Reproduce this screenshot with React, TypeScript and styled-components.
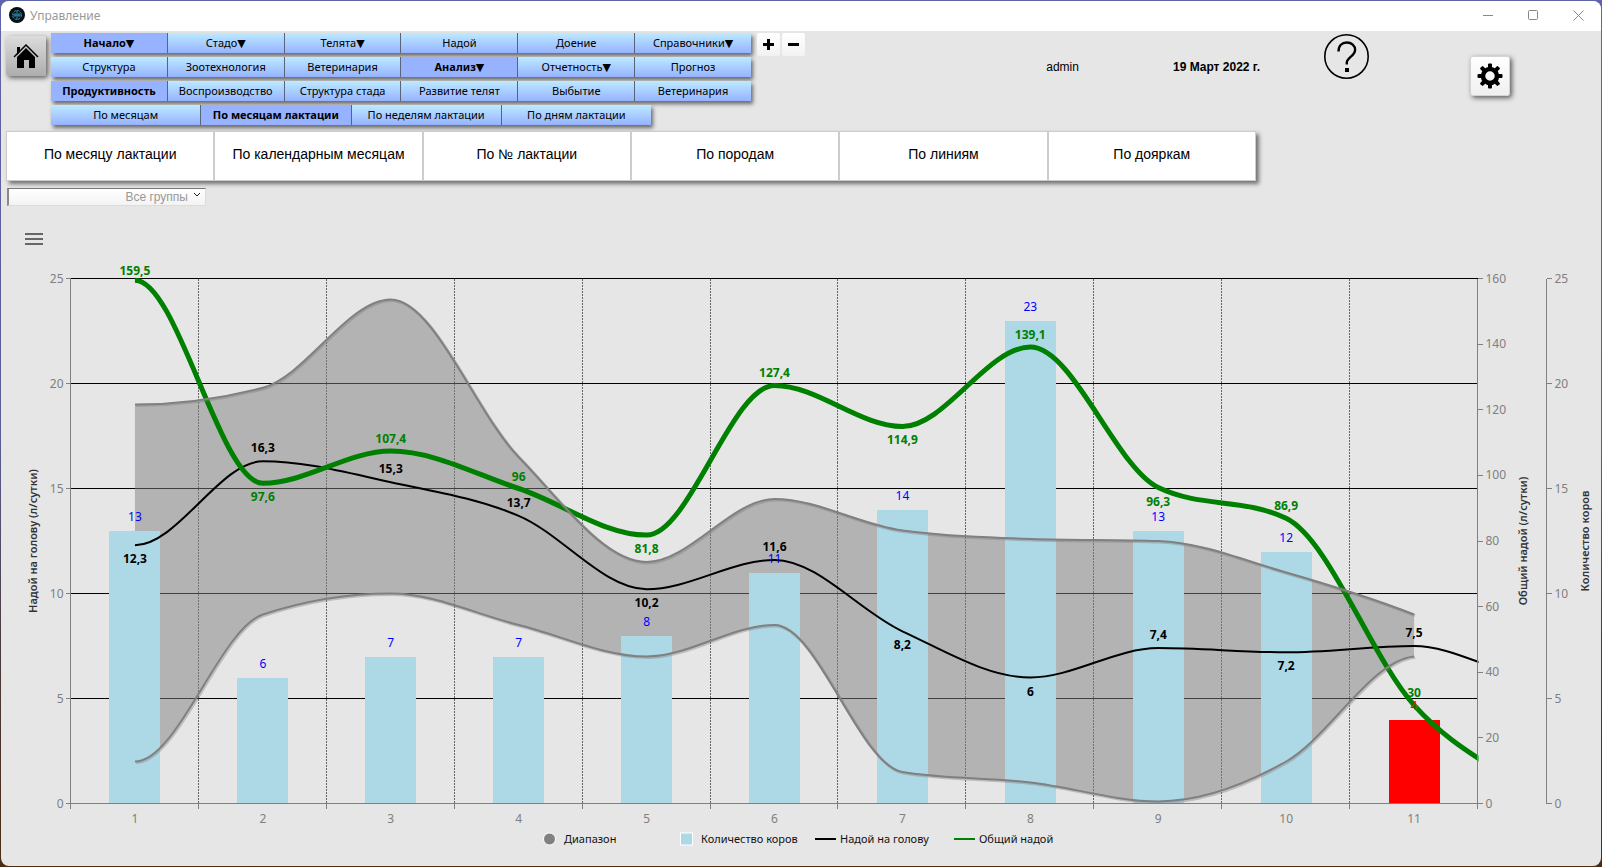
import React, { useEffect, useRef, useState } from "react";
import styled, { createGlobalStyle, css } from "styled-components";

const UI = `"Noto Sans", "DejaVu Sans", sans-serif`;
const ARIAL = `"Liberation Sans", Arial, sans-serif`;

const GlobalStyle = createGlobalStyle`
  * { box-sizing: border-box; }
  html, body, #root { height: 100%; }
  body { margin: 0; background: #5b5f9c; font-family: ${UI}; }
  button { font: inherit; color: inherit; padding: 0; border: 0; cursor: pointer; }
`;

const Desktop = styled.div`
  min-height: 100%;
  padding: 1px;
  display: flex;
  background: linear-gradient(to bottom, #5f63a8 0%, #5a5e96 50%, #4a3a3c 75%, #4d2c14 100%);
`;

const Window = styled.div`
  flex: 1;
  min-width: 0;
  display: flex;
  flex-direction: column;
  background: #e6e6e6;
  border-radius: 8px;
  overflow: hidden;
`;

const TitleBar = styled.header`
  display: flex;
  align-items: center;
  height: 30px;
  padding: 0 16px 2px 8px;
  background: #fff;
  font-size: 12px;
  color: #999;
`;

const Title = styled.h1`
  flex: 1;
  margin: 0 0 0 5px;
  font: inherit;
`;

const Caption = styled.div`
  display: flex;
  gap: 32px;
`;

const CaptionButton = styled.button`
  display: flex;
  justify-content: center;
  width: 13px;
  background: none;
`;

const Header = styled.div`
  display: flex;
  align-items: flex-start;
  padding: 2px 91px 0 5px;
`;

const HomeButton = styled.button`
  width: 40px;
  height: 40px;
  margin: 3px 5px 0 0;
  display: grid;
  place-items: center;
  border-radius: 3px;
  background: linear-gradient(#dcdcdc, #adadad);
  box-shadow: 2px 2px 5px rgba(0, 0, 0, 0.6);
`;

const Menus = styled.nav`
  flex: 0 1 700px;
  display: flex;
  flex-direction: column;
  gap: 4px;
`;

const MenuRow = styled.div<{ $short?: boolean }>`
  display: flex;
  width: ${(p) => (p.$short ? "600px" : "100%")};
  max-width: 100%;
  height: 20px;
  box-shadow: 2px 3px 4px rgba(0, 0, 0, 0.55);
`;

const MenuButton = styled.button<{ $active?: boolean }>`
  flex: 1 1 0;
  min-width: 0;
  font-size: 11px;
  line-height: 20px;
  white-space: nowrap;
  color: #000;
  background: linear-gradient(#bdeaff, #96b3ff);
  & + & { border-left: 1px solid #5a6478; }
  ${(p) => p.$active && css`
    font-weight: 700;
    background: #97b2ff;
  `}
`;

const ZoomButtons = styled.div`
  display: flex;
  gap: 2px;
  margin-left: 6px;
`;

const SmallButton = styled.button`
  width: 23px;
  height: 23px;
  display: grid;
  place-items: center;
  border-radius: 2px;
  background: linear-gradient(#fff, #f2f2f2);
`;

const Account = styled.div`
  display: flex;
  align-items: flex-start;
  margin-left: auto;
  font-family: ${ARIAL};
  font-size: 12px;
  line-height: 16px;
`;

const User = styled.span`
  margin: 26px 94px 0 0;
`;

const Today = styled.strong`
  margin: 26px 64px 0 0;
`;

const HelpButton = styled.button`
  width: 45px;
  height: 45px;
  margin: 1px 101px 0 0;
  background: none;
`;

const GearButton = styled.button`
  width: 40px;
  height: 40px;
  margin-top: 23px;
  display: grid;
  place-items: center;
  border: 1px solid #d4d4d4;
  border-radius: 3px;
  background: linear-gradient(#fff, #f0f0f0);
  box-shadow: 2px 2px 5px rgba(0, 0, 0, 0.6);
`;

const Reports = styled.div`
  display: flex;
  width: calc(78% + 2px);
  height: 50px;
  margin: 6px 0 0 5px;
  border: 1px solid #ccc;
  background: #fff;
  box-shadow: 3px 3px 4px rgba(0, 0, 0, 0.5);
`;

const ReportButton = styled.button`
  flex: 1 1 0;
  padding-bottom: 5px;
  background: #fff;
  font-family: ${ARIAL};
  font-size: 14px;
  & + & { border-left: 2px solid #ccc; }
`;

const GroupField = styled.label`
  position: relative;
  display: block;
  width: 199px;
  height: 18px;
  margin: 7px 0 0 6px;
`;

const GroupSelect = styled.select`
  appearance: none;
  display: block;
  width: 100%;
  height: 100%;
  padding: 0 17px 0 4px;
  border: 1px solid #dcdcdc;
  border-top-color: #777;
  border-left: 2px solid #888;
  border-radius: 0;
  background: linear-gradient(#fff, #f3f3f3);
  color: #999;
  font-family: ${ARIAL};
  font-size: 12px;
  text-align: right;
  text-align-last: right;
`;

const SelectArrow = styled.svg`
  position: absolute;
  right: 5px;
  top: 4px;
  pointer-events: none;
`;

const ChartPanel = styled.main`
  position: relative;
  flex: 1;
  padding-bottom: 17px;
`;

const ChartMenu = styled.button`
  position: absolute;
  left: 24px;
  top: 27px;
  width: 18px;
  height: 14px;
  background: none;
  display: flex;
`;

const Plot = styled.svg`
  display: block;
  width: 100%;
  height: 624px;
  font-family: ${UI};
  font-size: 12px;
`;

const Legend = styled.ul`
  display: flex;
  justify-content: center;
  margin: 0;
  padding: 0;
  list-style: none;
  font-size: 11px;
  line-height: 18px;
  color: #111;
`;

const LegendItem = styled.li<{ $width: number; $gap?: number }>`
  display: flex;
  align-items: center;
  gap: ${(p) => p.$gap ?? 4}px;
  min-width: ${(p) => p.$width}px;
  white-space: nowrap;
`;

const menus: { short?: boolean; active: string; items: string[] }[] = [
  { active: "Начало▼", items: ["Начало▼", "Стадо▼", "Телята▼", "Надой", "Доение", "Справочники▼"] },
  { active: "Анализ▼", items: ["Структура", "Зоотехнология", "Ветеринария", "Анализ▼", "Отчетность▼", "Прогноз"] },
  { active: "Продуктивность", items: ["Продуктивность", "Воспроизводство", "Структура стада", "Развитие телят", "Выбытие", "Ветеринария"] },
  { short: true, active: "По месяцам лактации", items: ["По месяцам", "По месяцам лактации", "По неделям лактации", "По дням лактации"] },
];

const reports = ["По месяцу лактации", "По календарным месяцам", "По № лактации", "По породам", "По линиям", "По дояркам"];

const cows = [13, 6, 7, 7, 8, 11, 14, 23, 13, 12, 4];
const perHead = [12.3, 16.3, 15.3, 13.7, 10.2, 11.6, 8.2, 6, 7.4, 7.2, 7.5, 6];
const total = [159.5, 97.6, 107.4, 96, 81.8, 127.4, 114.9, 139.1, 96.3, 86.9, 30, 0];
const high = [19, 19.8, 24, 16.5, 11.5, 14.5, 13, 12.6, 12.5, 11, 9];
const low = [2, 9, 10, 8.5, 7, 8.5, 1.5, 1, 0.1, 2, 7];
const perHeadBelow = [0, 4, 6, 7, 9];
const totalBelow = [1, 4, 6, 8];

const TOP = 72.5;
const HEIGHT = 525;
const LEFT = 69.5;

/* Monotone cubic through the values; the slopes at both ends are given. */
function smooth(ys: number[], x0: number, step: number, first = 0, last = 0) {
  const n = ys.length;
  const d = ys.slice(1).map((y, i) => y - ys[i]);
  const m = ys.map((_, i) => {
    if (i === 0) return first;
    if (i === n - 1) return last;
    const a = d[i - 1];
    const b = d[i];
    if (a * b <= 0) return 0;
    return Math.sign(a) * 2 * Math.min(Math.abs(a), Math.abs(b), Math.abs(a + b) / 4);
  });
  let path = `${x0} ${ys[0]}`;
  for (let i = 1; i < n; i++) {
    const xa = x0 + (i - 1) * step;
    const xb = xa + step;
    path += ` C${xa + step / 3} ${ys[i - 1] + m[i - 1] / 3} ${xb - step / 3} ${ys[i] - m[i] / 3} ${xb} ${ys[i]}`;
  }
  return path;
}

const comma = (n: number) => String(n).replace(".", ",");

function MilkChart() {
  const ref = useRef<SVGSVGElement>(null);
  const [width, setWidth] = useState(() => window.innerWidth - 2);
  useEffect(() => {
    const el = ref.current;
    if (!el) return;
    const observer = new ResizeObserver(() => setWidth(el.clientWidth || el.getBoundingClientRect().width));
    observer.observe(el);
    return () => observer.disconnect();
  }, []);

  const right = width - 123.5;
  const step = (right - LEFT) / 11;
  const x0 = LEFT + step / 2 + 0.5;
  const bottom = TOP + HEIGHT;
  const y25 = (v: number) => bottom - (v * HEIGHT) / 25;
  const y160 = (v: number) => bottom - (v * HEIGHT) / 160;
  const x = (i: number) => x0 + i * step;
  const barWidth = Math.round(step * 0.4);
  const axis2 = right + 69;

  const highPath = smooth(high.map(y25), x0, step, 0, 50);
  const lowYs = low.map(y25);
  const lowPath = smooth(lowYs, x0, step, 0, -12);
  const backPath = smooth([...lowYs].reverse(), x(10), -step, 12, 0);
  const scale25 = [0, 5, 10, 15, 20, 25];
  const scale160 = [0, 20, 40, 60, 80, 100, 120, 140, 160];

  return (
    <Plot ref={ref} role="img" aria-label="Надой по месяцам лактации">
      <defs>
        <clipPath id="plot-area">
          <rect x={LEFT} y={TOP - 10} width={right - LEFT + 1} height={HEIGHT + 10} />
        </clipPath>
      </defs>

      <g stroke="#000" shapeRendering="crispEdges">
        {scale25.slice(1).map((v) => <line key={v} x1={LEFT} x2={right} y1={y25(v)} y2={y25(v)} />)}
      </g>
      <g stroke="#666" strokeDasharray="2 1" shapeRendering="crispEdges">
        {cows.slice(1).map((_, i) => (
          <line key={i} x1={LEFT + (i + 1) * step} x2={LEFT + (i + 1) * step} y1={TOP} y2={bottom} />
        ))}
      </g>

      <path d={`M${highPath} L${backPath} Z`} fill="#808080" fillOpacity="0.5" />
      {cows.map((v, i) => (
        <rect
          key={i}
          x={Math.round(x(i) - barWidth / 2)}
          y={Math.round(y25(v))}
          width={barWidth}
          height={Math.round(bottom - y25(v))}
          fill={i === 10 ? "#f00" : "#add8e6"}
        />
      ))}
      <g fill="none" clipPath="url(#plot-area)">
        <path d={`M${smooth(perHead.map(y25), x0, step)}`} stroke="#000" strokeWidth="2" />
        <path d={`M${smooth(total.map(y160), x0, step, 0, 112)}`} stroke="#008000" strokeWidth="5" />
        <g stroke="#808080">
          <path d={`M${highPath}`} strokeWidth="3" strokeOpacity="0.4" transform="translate(1 1)" />
          <path d={`M${lowPath}`} strokeWidth="3" strokeOpacity="0.4" transform="translate(1 1)" />
          <path d={`M${highPath}`} strokeWidth="2" />
          <path d={`M${lowPath}`} strokeWidth="2" />
        </g>
      </g>

      <g stroke="#808080" shapeRendering="crispEdges">
        <path d={`M${LEFT} ${TOP}V${bottom}M${right} ${TOP}V${bottom}M${axis2} ${TOP}V${bottom}M${LEFT} ${bottom}H${right}`} />
        {scale25.map((v) => <path key={v} d={`M${LEFT - 5} ${y25(v)}h5M${axis2} ${y25(v)}h5`} />)}
        {scale160.map((v) => <path key={v} d={`M${right} ${y160(v)}h5`} />)}
        {[...cows, 0].map((_, i) => <path key={i} d={`M${LEFT + i * step} ${bottom}v5`} />)}
      </g>

      <g fill="#808080">
        {scale25.map((v) => (
          <React.Fragment key={v}>
            <text x={LEFT - 7} y={y25(v) + 4} textAnchor="end">{v}</text>
            <text x={axis2 + 8} y={y25(v) + 4}>{v}</text>
          </React.Fragment>
        ))}
        {scale160.map((v) => <text key={v} x={right + 8} y={y160(v) + 4}>{v}</text>)}
        {cows.map((_, i) => <text key={i} x={x(i)} y={bottom + 19} textAnchor="middle">{i + 1}</text>)}
      </g>

      <g fontSize="11" fontWeight="600" fill="#333" textAnchor="middle">
        <text transform={`translate(36 ${TOP + HEIGHT / 2}) rotate(-90)`}>Надой на голову (л/сутки)</text>
        <text transform={`translate(${right + 49} ${TOP + HEIGHT / 2}) rotate(-90)`}>Общий надой (л/сутки)</text>
        <text transform={`translate(${right + 111} ${TOP + HEIGHT / 2}) rotate(-90)`}>Количество коров</text>
      </g>

      <g fontSize="12" textAnchor="middle">
        {cows.map((v, i) => (
          <text key={i} x={x(i)} y={y25(v) - 10} fill={i === 10 ? "#f00" : "#00f"}>{v}</text>
        ))}
        {perHead.slice(0, 11).map((v, i) => (
          <text key={i} x={x(i)} y={y25(v) + (perHeadBelow.includes(i) ? 18 : -9)} fontWeight="700">{comma(v)}</text>
        ))}
        {total.slice(0, 11).map((v, i) => (
          <text
            key={i}
            x={x(i)}
            y={Math.max(TOP - 4, y160(v) + (totalBelow.includes(i) ? 18 : -8))}
            fontWeight="700"
            fill="#008000"
          >
            {comma(v)}
          </text>
        ))}
      </g>
    </Plot>
  );
}

function LineKey({ color }: { color: string }) {
  return (
    <svg width="21" height="14" aria-hidden="true">
      <path d="M0 7h21" stroke={color} strokeWidth="2" />
    </svg>
  );
}

export default function App() {
  return (
    <>
      <GlobalStyle />
      <Desktop>
        <Window>
          <TitleBar>
            <svg width="16" height="16" viewBox="0 0 16 16" aria-hidden="true">
              <circle cx="8" cy="8" r="8" fill="#0a0d14" />
              <g fill="none" stroke="#2f96ae">
                <circle cx="8" cy="8" r="4.500" strokeDasharray="2.500 1" />
                <path d="M8 3.500v9M4 8h8M6 6v4M10 6v4" />
              </g>
            </svg>
            <Title>Управление</Title>
            <Caption>
              <CaptionButton aria-label="Свернуть">
                <svg width="11" height="11"><path d="M0 5.500h10" stroke="#888" /></svg>
              </CaptionButton>
              <CaptionButton aria-label="Развернуть">
                <svg width="11" height="11"><rect x=".5" y=".5" width="9" height="9" rx="1" fill="none" stroke="#888" /></svg>
              </CaptionButton>
              <CaptionButton aria-label="Закрыть">
                <svg width="11" height="11"><path d="M.5 .5l10 10M10.500 .5l-10 10" stroke="#888" /></svg>
              </CaptionButton>
            </Caption>
          </TitleBar>

          <Header>
            <HomeButton aria-label="Домой">
              <svg width="26" height="26" viewBox="0 0 26 26">
                <path d="M4 4h3v5l-3 3z" />
                <path d="M1 14L13 2l12 12" fill="none" stroke="#000" strokeWidth="1.500" />
                <path d="M13 5l9 9v11h-6v-8h-5v8H4V14z" />
              </svg>
            </HomeButton>
            <Menus>
              {menus.map((row) => (
                <MenuRow key={row.active} $short={row.short}>
                  {row.items.map((item) => (
                    <MenuButton key={item} $active={item === row.active}>{item}</MenuButton>
                  ))}
                </MenuRow>
              ))}
            </Menus>
            <ZoomButtons>
              <SmallButton aria-label="Увеличить">
                <svg width="11" height="11"><path d="M5.500 0v11M0 5.500h11" stroke="#000" strokeWidth="3" /></svg>
              </SmallButton>
              <SmallButton aria-label="Уменьшить">
                <svg width="11" height="11"><path d="M0 5.500h11" stroke="#000" strokeWidth="3" /></svg>
              </SmallButton>
            </ZoomButtons>
            <Account>
              <User>admin</User>
              <Today>19 Март 2022 г.</Today>
              <HelpButton aria-label="Справка">
                <svg width="45" height="45" viewBox="0 0 45 45" fill="none" stroke="#000">
                  <circle cx="22.500" cy="22.500" r="21.700" strokeWidth="1.600" />
                  <path d="M14.500 17.500c0-6 3.500-9 8.300-9s8.300 3 8.300 7.500c0 6-8.300 7.500-8.300 12.500v2" strokeWidth="2.400" />
                  <rect x="21" y="34" width="4" height="4" fill="#000" stroke="none" />
                </svg>
              </HelpButton>
              <GearButton aria-label="Настройки">
                <svg width="26" height="26" viewBox="-13 -13 26 26">
                  <circle r="7" fill="none" stroke="#000" strokeWidth="4.500" />
                  {[0, 45, 90, 135, 180, 225, 270, 315].map((a) => (
                    <rect key={a} x="-2" y="-12.500" width="4" height="5" rx="1" transform={`rotate(${a})`} />
                  ))}
                </svg>
              </GearButton>
            </Account>
          </Header>

          <Reports>
            {reports.map((r) => <ReportButton key={r}>{r}</ReportButton>)}
          </Reports>

          <GroupField>
            <GroupSelect aria-label="Группа" defaultValue="all">
              <option value="all">Все группы</option>
            </GroupSelect>
            <SelectArrow width="8" height="6"><path d="M1 1l3 3 3-3" fill="none" stroke="#222" /></SelectArrow>
          </GroupField>

          <ChartPanel>
            <ChartMenu aria-label="Меню графика">
              <svg width="18" height="12"><path d="M0 1h18M0 6h18M0 11h18" stroke="#666" strokeWidth="2" /></svg>
            </ChartMenu>
            <MilkChart />
            <Legend>
              <LegendItem $width={137} $gap={8}>
                <svg width="13" height="14" aria-hidden="true"><circle cx="6.500" cy="7" r="6" fill="#808080" stroke="#fff" /></svg>
                Диапазон
              </LegendItem>
              <LegendItem $width={135} $gap={8}>
                <svg width="13" height="14" aria-hidden="true"><rect x=".5" y="1" width="12" height="12" fill="#add8e6" stroke="#fff" /></svg>
                Количество коров
              </LegendItem>
              <LegendItem $width={139}><LineKey color="#000" />Надой на голову</LegendItem>
              <LegendItem $width={105}><LineKey color="#008000" />Общий надой</LegendItem>
            </Legend>
          </ChartPanel>
        </Window>
      </Desktop>
    </>
  );
}
